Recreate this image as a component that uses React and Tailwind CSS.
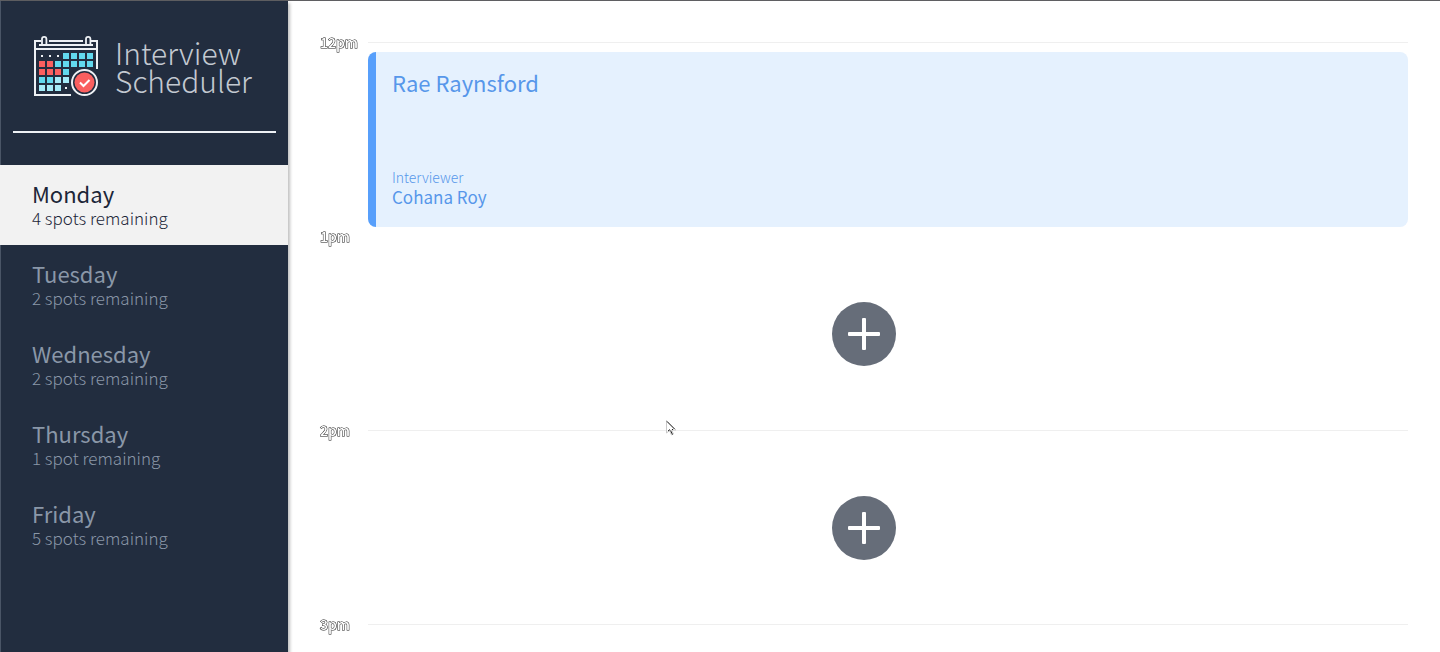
const DAYS = [
  { name: "Monday", spots: "4 spots remaining", selected: true },
  { name: "Tuesday", spots: "2 spots remaining" },
  { name: "Wednesday", spots: "2 spots remaining" },
  { name: "Thursday", spots: "1 spot remaining" },
  { name: "Friday", spots: "5 spots remaining" },
];

const SLOTS = [
  { time: "12pm", student: "Rae Raynsford", interviewer: "Cohana Roy" },
  { time: "1pm", hideRule: true },
  { time: "2pm" },
];

// One letter per calendar cell: c cyan, r red, l light, d dot, space empty
const CELLS = ["dddcccc", "rrccccc", "rrrc   ", "ccll   ", "llld   "];
const CELL_FILL = { c: "#62d9ee", r: "#fa5f5f", l: "#a5ebf8" };

function CalendarLogo() {
  return (
    <svg width="66" height="62" viewBox="33 36 66 62" fill="none" className="shrink-0" aria-hidden="true">
      <g stroke="#eef1f5" strokeWidth="2">
        <path d="M41 42H35V96H71M97 70V42H91M49 42H83M39 46H93M35 50H97" />
        <path d="M42 45V40a2.2 2.2 0 0 1 4.400 0V45M86 45V40a2.200 2.200 0 0 1 4.400 0V45" strokeWidth="1.800" />
      </g>
      {CELLS.map((row, r) =>
        [...row].map((cell, c) => {
          if (cell === " ") return null;
          if (cell === "d")
            return <rect key={`${r}-${c}`} x={41 + c * 8} y={56 + r * 8} width="2" height="2" fill="#eef1f5" />;
          return (
            <rect key={`${r}-${c}`} x={39 + c * 8} y={54 + r * 8} width="6" height="6" fill={CELL_FILL[cell]} />
          );
        })
      )}
      <circle cx="84.500" cy="83.500" r="15" fill="#222d3f" />
      <circle cx="84.500" cy="83.500" r="12.500" stroke="#eef1f5" strokeWidth="2" />
      <circle cx="84.500" cy="83.500" r="10" fill="#fa5f5f" />
      <path d="M80 83.500l3.500 3.500 6-6" stroke="#fff" strokeWidth="2" />
    </svg>
  );
}

function DayItem({ day }) {
  return (
    <li>
      <button
        type="button"
        aria-pressed={!!day.selected}
        className={
          "flex h-20 w-full flex-col justify-center px-8 pb-0.5 text-left " +
          (day.selected ? "bg-[#f2f2f2] text-[#1c2638]" : "text-[#8a97a8]")
        }
      >
        <span className="text-[22px] leading-7 font-normal">{day.name}</span>
        <span className="text-[17px] leading-[22px] font-light">{day.spots}</span>
      </button>
    </li>
  );
}

function HourHeader({ time, hideRule }) {
  return (
    <header className="flex h-[19px] items-center">
      <h2 className="w-12 pb-0.5 text-sm leading-5 font-medium text-white will-change-transform [-webkit-text-stroke:1px_#111111] [paint-order:stroke]">
        {time}
      </h2>
      {!hideRule && <hr className="grow border-[#efefef]" />}
    </header>
  );
}

function Appointment({ slot }) {
  return (
    <article>
      <HourHeader time={slot.time} hideRule={slot.hideRule} />
      {slot.student ? (
        <section className="ml-12 flex h-[175px] flex-col justify-between rounded-lg border-l-8 border-[#579ffb] bg-[#e5f1fe] px-4 pt-3.5 pb-5 text-[#5797ea]">
          <h3 className="text-[22px] leading-8 font-normal">{slot.student}</h3>
          <div>
            <h4 className="text-sm leading-5 font-light">Interviewer</h4>
            <p className="text-[17px] leading-5 font-normal">{slot.interviewer}</p>
          </div>
        </section>
      ) : (
        <div className="ml-12 flex h-[175px] items-center justify-center pr-12">
          <button
            type="button"
            aria-label={`Add appointment at ${slot.time}`}
            className="flex size-16 items-center justify-center rounded-full bg-[#666d79]"
          >
            <svg width="32" height="32" viewBox="0 0 32 32" fill="#fff" aria-hidden="true">
              <rect x="14" y="0" width="4" height="32" rx="1" />
              <rect x="0" y="14" width="32" height="4" rx="1" />
            </svg>
          </button>
        </div>
      )}
    </article>
  );
}

export default function App() {
  return (
    <div className="relative flex min-h-screen border-t border-[#5f5f62] bg-white font-['Noto_Sans_CJK_JP',sans-serif]">
      <aside className="w-1/5 shrink-0 border-l border-[#4a5566] bg-[#222d3f] shadow-[2px_2px_3px_rgba(0,0,0,0.25)]">
        <div className="flex h-[130px] items-center gap-4 pl-8">
          <CalendarLogo />
          <p className="text-[30px] leading-7 font-light text-[#c3c9d1]">
            Interview
            <br />
            Scheduler
          </p>
        </div>
        <hr className="mx-3 border-t-2 border-[#eef1f5]" />
        <nav className="-ml-px mt-8" aria-label="Days">
          <ul>
            {DAYS.map((day) => (
              <DayItem key={day.name} day={day} />
            ))}
          </ul>
        </nav>
      </aside>
      <main className="grow px-8 pt-8">
        {SLOTS.map((slot) => (
          <Appointment key={slot.time} slot={slot} />
        ))}
        <HourHeader time="3pm" />
      </main>
      <svg
        className="pointer-events-none absolute top-[418px] left-[665px]"
        width="12"
        height="18"
        viewBox="0 0 12 18"
        aria-hidden="true"
      >
        <path d="M1.500 1.500V14l3-2.500 2 4.500 2-1-2-4H11z" fill="#fff" stroke="#c8c8c8" />
        <path d="M2 2.500l7.500 7.500M3 12l2-1.500M5.500 11.500l2 4M7 10.500h1" stroke="#222" fill="none" />
      </svg>
    </div>
  );
}
